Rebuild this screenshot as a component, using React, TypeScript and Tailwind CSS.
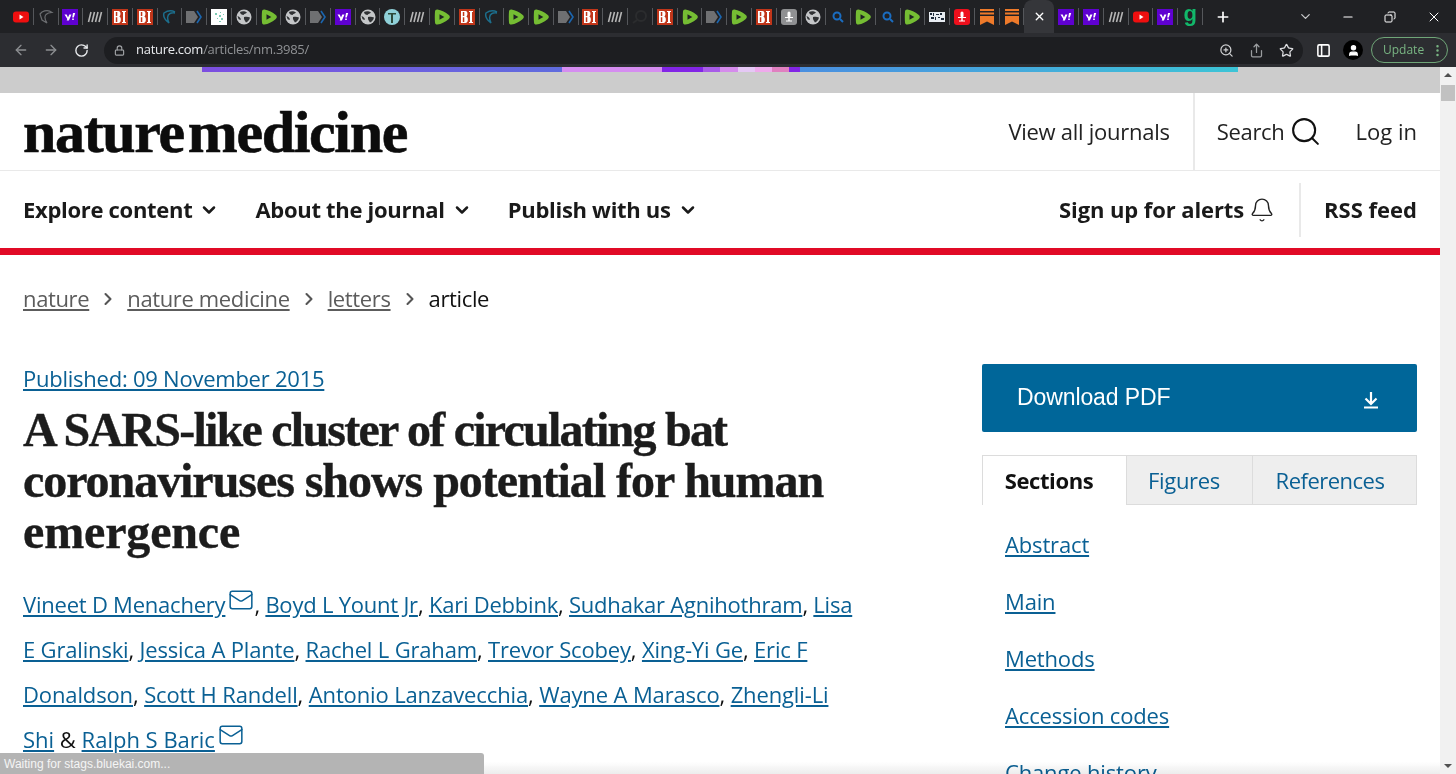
import { Bell, ChevronDown, ChevronRight, Search, Mail, Minus, Plus, X, ArrowLeft, ArrowRight, RotateCw, Lock, ZoomIn, Share, Star, PanelRight, User, Copy, EllipsisVertical } from "lucide-react";

type Fav = "yt" | "heart" | "yahoo" | "lll" | "bi" | "c" | "chev" | "img" | "globe" | "rumble" | "teal" | "dark" | "mic" | "search" | "box" | "redmic" | "sub" | "g" | "active";

const tabsBefore: Fav[] = [
  "yt", "heart", "yahoo", "lll", "bi", "bi", "c", "chev", "img", "globe", "rumble", "globe", "chev", "yahoo", "globe", "teal", "lll", "rumble", "bi", "c",
  "rumble", "rumble", "chev", "bi", "lll", "dark", "bi", "rumble", "chev", "rumble", "bi", "mic", "globe", "search", "rumble", "search", "rumble", "box", "redmic", "sub", "sub",
];
const tabsAfter: Fav[] = ["yahoo", "yahoo", "lll", "yt", "yahoo", "g"];

function Favicon({ kind }: { kind: Fav }) {
  switch (kind) {
    case "yt":
      return (
        <svg width="16" height="16" viewBox="0 0 16 16">
          <rect y="2.5" width="16" height="11" rx="3" fill="#ee0f0f" />
          <path d="M6.500 5.500v5l4-2.500z" fill="#fff" />
        </svg>
      );
    case "heart":
      return (
        <svg width="16" height="16" viewBox="0 0 16 16" fill="none" stroke="#6b6d70" strokeWidth="1.2">
          <path d="M14 3.500C11 1 7 1.500 4 3L2 5l2 6 5 3c-2-3-3-6-1-8.500 2-2 4-2 6-2z" />
        </svg>
      );
    case "yahoo":
      return (
        <svg width="16" height="16" viewBox="0 0 16 16">
          <rect width="16" height="16" fill="#5f01d1" />
          <path d="M2.500 5.500h2.200l1.300 3 1.300-3h2.200L6.900 11.500H4.700l.6-1.500z" fill="#fff" />
          <path d="M11 4h2.200l-1.400 4.500h-1.600zM10.200 9.400h1.600v1.600h-1.600z" fill="#fff" />
        </svg>
      );
    case "lll":
      return (
        <svg width="16" height="16" viewBox="0 0 16 16" fill="none" stroke="#b5b5b5" strokeWidth="1.6">
          <path d="M4 3 1.500 13M7.500 3 5 13M11 3 8.500 13M14.500 3 12 13" />
        </svg>
      );
    case "bi":
      return (
        <svg width="16" height="16" viewBox="0 0 16 16">
          <rect width="16" height="16" fill="#c1361a" />
          <path d="M2 2h4.500c2.500 0 2.500 4.500.8 5.500 2.200.7 2.200 6.500-.8 6.500H2zM3.800 3v4h1.500V3zM3.800 8.200V13h1.500V8.200zM10 2h4v1h-1v10h1v1h-4v-1h1V3h-1z" fill="#fff" fillRule="evenodd" />
        </svg>
      );
    case "c":
      return (
        <svg width="16" height="16" viewBox="0 0 16 16" fill="none" stroke="#1c6e8c" strokeWidth="1.5">
          <path d="M14 3C10 1 6 2 3 4c-1 3 1 7 5 10-2-4-2-8 1-9.500 1.500-.7 3-.8 5-.5" />
        </svg>
      );
    case "chev":
      return (
        <svg width="16" height="16" viewBox="0 0 16 16">
          <path d="M0 2h8l4 6-4 6H0z" fill="#6f7072" />
          <path d="M11 2l4 6-4 6" fill="none" stroke="#1b66b0" strokeWidth="1.6" />
        </svg>
      );
    case "img":
      return (
        <svg width="16" height="16" viewBox="0 0 16 16">
          <rect width="16" height="16" fill="#fff" />
          <path d="M4 4h2v2H4zM8 6h2v2H8zM10 9h2v2h-2zM6 9h1v1H6zM9 3h1v1H9zM12 5h1v1h-1zM8 12h2v1H8z" fill="#7ccbb4" />
        </svg>
      );
    case "globe":
      return (
        <svg width="16" height="16" viewBox="0 0 16 16">
          <circle cx="8" cy="8" r="7.500" fill="#c4c6c8" />
          <path d="M4 3c2-1 5-1 7 .5-1 1.500-3 1-3.500 2.500C6 6 4 5 4 3zM8 8c2-.5 4-.5 6 .5-.5 2.500-2 4-4 5-1-2-2.500-3-2-5.500zM1.500 7c1.500.5 3 1.500 3.500 3.500-1 .5-2 0-2.500-.5z" fill="#2f3134" />
        </svg>
      );
    case "rumble":
      return (
        <svg width="16" height="16" viewBox="0 0 16 16">
          <path d="M3.500.5C7 1 11 3 14.500 5.800c1.800 1.400 1.800 3 0 4.400C11 13 7 15 3.500 15.500 2 15.700 1.200 15 1 13.500.7 10 .7 6 1 2.500 1.200 1 2 .3 3.500.5z" fill="#75bd33" />
          <path d="M5.500 5.300v5.400L10.300 8z" fill="#202124" />
        </svg>
      );
    case "teal":
      return (
        <svg width="16" height="16" viewBox="0 0 16 16">
          <circle cx="8" cy="8" r="8" fill="#8fd0d8" />
          <path d="M4 4h8v1.500H9V14H7V5.500H4z" fill="#2c4a3a" />
        </svg>
      );
    case "dark":
      return (
        <svg width="16" height="16" viewBox="0 0 16 16" fill="none" stroke="#2b2c2e" strokeWidth="2">
          <circle cx="9" cy="7" r="5" />
          <path d="M5 11 1 14" />
        </svg>
      );
    case "mic":
    case "redmic":
      return (
        <svg width="16" height="16" viewBox="0 0 16 16">
          <rect width="16" height="16" rx="3" fill={kind === "mic" ? "#8f9092" : "#ee0f1c"} />
          <rect x="6.500" y="2.500" width="3" height="6" rx="1.500" fill="#fff" />
          <path d="M4 8h8v1H8.700v2.500H11v1H5v-1h2.300V9H4z" fill="#fff" />
        </svg>
      );
    case "search":
      return (
        <svg width="16" height="16" viewBox="0 0 16 16" fill="none" stroke="#1a6cc0" strokeWidth="2">
          <circle cx="7" cy="7" r="3.500" />
          <path d="M10 10l3 3" />
        </svg>
      );
    case "box":
      return (
        <svg width="16" height="16" viewBox="0 0 16 16">
          <rect y="3" width="16" height="10" fill="#e8edf2" />
          <path d="M1 4h2v2H1zM4 4h1v3H4zM7 5h3v1H7zM11 4h2v2h-2zM2 8h3v2H2zM6 8h1v3H6zM9 8h2v1H9zM12 9h3v2h-3z" fill="#1d2a3a" />
        </svg>
      );
    case "sub":
      return (
        <svg width="16" height="16" viewBox="0 0 16 16" fill="#ee7a2a">
          <path d="M1 0h14v2H1zM1 3.500h14v2H1zM1 7h14v9l-7-3.500L1 16z" />
        </svg>
      );
    case "g":
      return <span className="font-['Liberation_Sans',sans-serif] text-[22px] leading-none font-bold text-[#12b76a] -mt-1.5">g</span>;
    default:
      return null;
  }
}

function TabCell({ kind }: { kind: Fav }) {
  return (
    <div className="relative flex h-[33px] w-[24.77px] shrink-0 items-center justify-center border-r border-[#55575b] [border-image:linear-gradient(transparent_25%,#55575b_25%,#55575b_75%,transparent_75%)_1]">
      <Favicon kind={kind} />
    </div>
  );
}

function BrowserChrome() {
  return (
    <div className="shrink-0">
      <div className="flex h-[33px] items-center bg-[#202124] pl-[9px]">
        {tabsBefore.map((t, i) => (
          <TabCell key={i} kind={t} />
        ))}
        <div className="flex h-[33px] w-[30px] shrink-0 items-center justify-center rounded-t-lg bg-[#35363a]">
          <X size={13} strokeWidth={2.5} className="text-white" />
        </div>
        {tabsAfter.map((t, i) => (
          <TabCell key={i} kind={t} />
        ))}
        <Plus size={16} strokeWidth={2.5} className="ml-[12px] text-white" />
        <div className="flex-1" />
        <ChevronDown size={15} className="mr-[28px] text-[#c8c9cb]" />
        <Minus size={14} className="mr-[29px] text-white" />
        <Copy size={12} className="mr-[30px] -scale-x-100 text-white" />
        <X size={16} strokeWidth={1.5} className="mr-[14px] text-white" />
      </div>
      <div className="flex h-[34px] items-center bg-[#2c2d31]">
        <ArrowLeft size={16} className="ml-[13px] text-[#8c8e91]" />
        <ArrowRight size={16} className="ml-[14px] text-[#8c8e91]" />
        <RotateCw size={15} strokeWidth={2.2} className="ml-[15px] text-[#e8eaed]" />
        <div className="ml-[15px] flex h-[27px] w-[1199px] items-center rounded-full bg-[#1d1e21] pl-[10px] pr-[9px]">
          <Lock size={11} strokeWidth={2.5} className="text-[#a0a2a5]" />
          <span className="ml-[11px] font-['Open_Sans',sans-serif] text-[13px] text-[#e8eaed] tracking-[-0.28px]">
            nature.com<span className="text-[#8f9194]">/articles/nm.3985/</span>
          </span>
          <div className="flex-1" />
          <ZoomIn size={15} className="text-[#cfd0d2]" />
          <Share size={15} className="ml-[15px] text-[#9a9c9f]" />
          <Star size={15} className="ml-[15px] text-[#dcdde0]" />
        </div>
        <PanelRight size={15} strokeWidth={2.5} className="ml-[13px] -scale-x-100 text-white" />
        <div className="ml-[12px] flex h-5 w-5 items-center justify-center rounded-full bg-black">
          <User size={13} fill="#fff" className="text-white" />
        </div>
        <div className="ml-[8px] flex h-[26px] w-[77px] items-center justify-between rounded-full border border-[#6fa678] pl-[11px] pr-[2px]">
          <span className="font-['Open_Sans',sans-serif] text-[12px] text-[#79b583]">Update</span>
          <EllipsisVertical size={15} className="text-[#79b583]" />
        </div>
      </div>
    </div>
  );
}

function ColorStripe() {
  return (
    <div className="flex h-[26px] items-start bg-[#cccccc] pl-[202px]">
      <div className="h-[5px] w-[360px] bg-gradient-to-r from-[#7c4ee0] to-[#5f6cde]" />
      <div className="h-[5px] w-[100px] bg-[#d58df0]" />
      <div className="h-[5px] w-[41px] bg-[#8225e6]" />
      <div className="h-[5px] w-[17px] bg-[#a85ce8]" />
      <div className="h-[5px] w-[18px] bg-[#d58cec]" />
      <div className="h-[5px] w-[17px] bg-[#e5c8f5]" />
      <div className="h-[5px] w-[17px] bg-[#efaaec]" />
      <div className="h-[5px] w-[17px] bg-[#e080c0]" />
      <div className="h-[5px] w-[11px] bg-[#8225e6]" />
      <div className="h-[5px] w-[438px] bg-gradient-to-r from-[#4a8fe0] to-[#3cc4d6]" />
    </div>
  );
}

function SiteHeader() {
  return (
    <div>
      <div className="flex h-[78px] items-stretch border-b border-[#e9e9e9] pl-[23px] pr-[23px]">
        <div className="flex items-center font-['Liberation_Serif',serif] text-[60px] leading-none font-bold tracking-[-1.35px] text-[#0c0c0c] [-webkit-text-stroke:0.6px_#0c0c0c]">
          nature<span className="ml-[4px]">medicine</span>
        </div>
        <div className="flex-1" />
        <div className="flex items-center pr-[23px] text-[22px] tracking-[-0.27px] text-[#222]">View all journals</div>
        <div className="flex items-center border-l-2 border-[#e9e9e9] pl-[22px] text-[22px] tracking-[-0.3px] text-[#222]">
          Search
          <Search size={33} strokeWidth={1.5} className="ml-[4px] text-[#111]" />
        </div>
        <div className="ml-[34px] flex items-center text-[22px] text-[#222]">Log in</div>
      </div>
      <div className="flex h-[77px] items-center pl-[23px] pr-[23px] text-[22px] font-bold tracking-[-0.3px] text-[#1a1a1a]">
        <span>Explore content</span>
        <ChevronDown size={20} strokeWidth={3} className="ml-[7px]" />
        <span className="ml-[36px]">About the journal</span>
        <ChevronDown size={20} strokeWidth={3} className="ml-[7px]" />
        <span className="ml-[36px]">Publish with us</span>
        <ChevronDown size={20} strokeWidth={3} className="ml-[7px]" />
        <div className="flex-1" />
        <span className="tracking-[-0.1px]">Sign up for alerts</span>
        <Bell size={26} strokeWidth={1.3} className="ml-[5px] text-[#222]" />
        <div className="ml-[24px] h-[54px] border-l-2 border-[#e9e9e9]" />
        <span className="ml-[23px] tracking-normal">RSS feed</span>
      </div>
      <div className="h-[7px] bg-[#e10a26]" />
    </div>
  );
}

function Crumb({ label }: { label: string }) {
  return (
    <>
      <a className="text-[#5c5c5c] underline underline-offset-2">{label}</a>
      <ChevronRight size={20} strokeWidth={2.5} className="mx-[9px] text-[#555]" />
    </>
  );
}

function Author({ name }: { name: string }) {
  return <a className="text-[#0a6094] underline underline-offset-2">{name}</a>;
}

function MailIcon() {
  return <Mail size={26} strokeWidth={1.4} className="ml-[3px] inline-block -translate-y-[7px] align-middle text-[#0a6094]" />;
}

function ArticleColumn() {
  return (
    <div className="w-[860px] whitespace-nowrap">
      <div className="flex h-[87px] items-center text-[22px] tracking-[-0.36px]">
        <Crumb label="nature" />
        <Crumb label="nature medicine" />
        <Crumb label="letters" />
        <span className="text-[#111]">article</span>
      </div>
      <div className="mt-[21px] text-[22px] leading-[30px] tracking-[-0.24px] text-[#0a6094] underline underline-offset-2">Published: 09 November 2015</div>
      <h1 className="mt-[11px] font-['Liberation_Serif',serif] text-[48px] leading-[51px] font-bold text-[#1c1c1c] [-webkit-text-stroke:0.4px_#1c1c1c]">
        <div className="tracking-[-1.76px]">A SARS-like cluster of circulating bat</div>
        <div className="tracking-[-1.05px]">coronaviruses shows potential for human</div>
        <div className="tracking-[-0.15px]">emergence</div>
      </h1>
      <div className="mt-[25px] text-[22px] leading-[45px] text-[#111]">
        <div className="tracking-[-0.22px]">
          <Author name="Vineet D Menachery" />
          <MailIcon />, <Author name="Boyd L Yount Jr" />, <Author name="Kari Debbink" />, <Author name="Sudhakar Agnihothram" />, <Author name="Lisa" />
        </div>
        <div className="tracking-[-0.17px]">
          <Author name="E Gralinski" />, <Author name="Jessica A Plante" />, <Author name="Rachel L Graham" />, <Author name="Trevor Scobey" />, <Author name="Xing-Yi Ge" />, <Author name="Eric F" />
        </div>
        <div className="tracking-[-0.13px]">
          <Author name="Donaldson" />, <Author name="Scott H Randell" />, <Author name="Antonio Lanzavecchia" />, <Author name="Wayne A Marasco" />, <Author name="Zhengli-Li" />
        </div>
        <div>
          <Author name="Shi" /> &amp; <Author name="Ralph S Baric" />
          <MailIcon />
        </div>
      </div>
    </div>
  );
}

const sections = ["Abstract", "Main", "Methods", "Accession codes", "Change history"];

function Sidebar() {
  return (
    <div className="w-[435px] shrink-0 pt-[109px]">
      <div className="flex h-[68px] items-center justify-between rounded-[2px] bg-[#006699] pb-[2px] pl-[35px] pr-[38px] font-['Liberation_Sans',sans-serif] text-[23px] tracking-[-0.1px] text-white">
        Download PDF
        <svg width="16" height="18" viewBox="0 0 16 18" fill="none" stroke="#fff" strokeWidth="2.2" className="mt-[5px]">
          <path d="M8 1v11M2.500 7.500 8 13l5.500-5.500M1 16.500h14" />
        </svg>
      </div>
      <div className="mt-[23px] flex h-[50px] text-[22px] tracking-[-0.3px]">
        <div className="flex w-[144px] items-center justify-center border-t border-l border-[#dcdcdc] pr-[11px] font-bold tracking-[-0.4px] text-[#111]">Sections</div>
        <div className="flex w-[127px] items-center justify-center border border-[#dcdcdc] bg-[#eeeeee] pr-[11px] text-[#0a6094]">Figures</div>
        <div className="flex flex-1 items-center justify-center border-y border-r border-[#dcdcdc] bg-[#eeeeee] pr-[9px] tracking-[-0.5px] text-[#0a6094]">References</div>
      </div>
      <div className="mt-[11px] flex flex-col pl-[23px] text-[22px] tracking-[-0.15px]">
        {sections.map((s) => (
          <a key={s} className="flex h-[57px] shrink-0 items-center text-[#0a6094] underline underline-offset-2">
            {s}
          </a>
        ))}
      </div>
    </div>
  );
}

export default function App() {
  return (
    <div className="relative flex h-[774px] w-[1456px] flex-col overflow-hidden bg-white font-['Open_Sans',sans-serif]">
      <BrowserChrome />
      <div className="flex min-h-0 flex-1">
        <div className="min-w-0 flex-1 overflow-hidden">
          <ColorStripe />
          <SiteHeader />
          <div className="flex justify-between pl-[23px] pr-[23px]">
            <ArticleColumn />
            <Sidebar />
          </div>
        </div>
        <div className="flex w-4 shrink-0 flex-col items-center bg-[#f1f1f1]">
          <div className="mt-[6px] h-0 w-0 border-x-[4px] border-b-[4px] border-x-transparent border-b-[#505050]" />
          <div className="mt-[8px] h-[16px] w-[14px] bg-[#c1c1c1]" />
          <div className="flex-1" />
          <div className="mb-[6px] h-0 w-0 border-x-[4px] border-t-[4px] border-x-transparent border-t-[#505050]" />
        </div>
      </div>
      <div className="pointer-events-none absolute bottom-0 left-0 right-4 h-[12px] bg-gradient-to-b from-transparent to-[#ececec] mix-blend-multiply" />
      <div className="absolute bottom-0 left-0 flex h-[21px] w-[484px] items-center rounded-tr-[3px] bg-[#b4b4b4] pl-[4px] font-['Liberation_Sans',sans-serif] text-[12px] text-[#f5f5f5]">
        Waiting for stags.bluekai.com...
      </div>
    </div>
  );
}
